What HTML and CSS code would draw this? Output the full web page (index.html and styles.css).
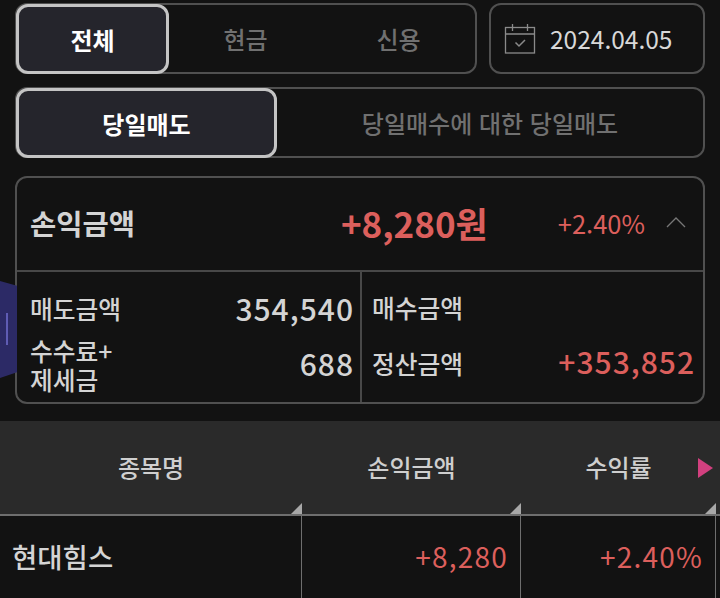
FILE: index.html
```html
<!DOCTYPE html>
<html lang="ko">
<head>
  <meta charset="UTF-8" />
  <meta name="viewport" content="width=device-width, initial-scale=1.0">
  <title>당일매도</title>
  <link rel="stylesheet" href="styles.css">
</head>
<body>
  <div class="side-tab"><span></span></div>

  <div class="filters">
    <div class="top-row">
      <div class="segment type-segment">
        <div class="seg-item active">전체</div>
        <div class="seg-item">현금</div>
        <div class="seg-item">신용</div>
      </div>
      <div class="date-box">
        <svg class="cal-icon" width="32" height="32" viewBox="0 0 32 32" fill="none" stroke="#8a8a8a" stroke-width="1.3">
          <rect x="1.5" y="4.5" width="29" height="25.5"/>
          <path d="M1.5 11h29M8.5 1v7M23.5 1v7"/>
          <path d="M11.5 19.5l3.5 3.5 6-6" stroke-width="1.5"/>
        </svg>
        <span>2024.04.05</span>
      </div>
    </div>
    <div class="segment sell-segment">
      <div class="seg-item active">당일매도</div>
      <div class="seg-item">당일매수에 대한 당일매도</div>
    </div>
  </div>

  <div class="summary">
    <div class="summary-head">
      <div class="summary-title">손익금액</div>
      <div class="summary-amount">+8,280원</div>
      <div class="summary-rate">+2.40%</div>
      <svg class="chevron" width="20" height="12" viewBox="0 0 20 12" fill="none" stroke="#777" stroke-width="1.3">
        <path d="M1 11l9-9 9 9"/>
      </svg>
    </div>
    <div class="summary-body">
      <div class="summary-col left-col">
        <div class="line first-line">
          <span class="label">매도금액</span>
          <span class="value">354,540</span>
        </div>
        <div class="line">
          <span class="label">수수료+<br>제세금</span>
          <span class="value">688</span>
        </div>
      </div>
      <div class="summary-col right-col">
        <div class="line first-line">
          <span class="label">매수금액</span>
        </div>
        <div class="line">
          <span class="label">정산금액</span>
          <span class="value red">+353,852</span>
        </div>
      </div>
    </div>
  </div>

  <div class="table">
    <div class="th">종목명</div>
    <div class="th">손익금액</div>
    <div class="th rate-th">수익률<i class="more-arrow"></i></div>
    <div class="th last-cell"></div>
    <div class="td name-cell">현대힘스</div>
    <div class="td red">+8,280</div>
    <div class="td red">+2.40%</div>
    <div class="td last-cell"></div>
  </div>
</body>
</html>
```

FILE: styles.css
```css
* {
  box-sizing: border-box;
}
body {
  background: #121212;
  font-family: "Noto Sans CJK KR", "Noto Sans", sans-serif;
  color: #d4d4d4;
  width: 720px;
  height: 598px;
  margin: 0;
  padding-top: 3px;
  overflow: hidden;
  position: relative;
}
.red {
  color: #dc5f5c;
}
.side-tab {
  position: absolute;
  left: 0;
  top: 281px;
  width: 17px;
  height: 97px;
  background: #2c2a66;
  clip-path: polygon(0 0, 100% 5%, 100% 94%, 0 100%);
}
.side-tab span {
  position: absolute;
  left: 6px;
  top: 32px;
  width: 2px;
  height: 32px;
  background: #5f5cb4;
}
.filters {
  padding: 0 15px;
  display: flex;
  flex-direction: column;
  gap: 13px;
}
.top-row {
  display: flex;
  gap: 12px;
}
.segment {
  display: flex;
  height: 71px;
  border: 2px solid #505050;
  border-radius: 12px;
}
.type-segment {
  width: 462px;
}
.sell-segment {
  width: 690px;
}
.seg-item {
  flex: 1;
  display: flex;
  align-items: center;
  justify-content: center;
  font-size: 24px;
  font-weight: 500;
  color: #707070;
}
.seg-item.active {
  background: #25252c;
  color: #fff;
  font-weight: 700;
  border: 3px solid #c4c4c4;
  border-radius: 12px;
  margin: -1px 0 -2px -1px;
}
.type-segment .seg-item.active {
  flex: 0 0 153px;
}
.sell-segment .seg-item.active {
  flex: 0 0 261px;
}
.date-box {
  width: 216px;
  height: 71px;
  border: 2px solid #505050;
  border-radius: 12px;
  display: flex;
  align-items: center;
  padding-left: 13px;
  gap: 14px;
  font-size: 24.5px;
  color: #d8d8d8;
}
.summary {
  margin: 18px 0 0 15px;
  width: 690px;
  height: 228px;
  border: 2px solid #505050;
  border-radius: 12px;
}
.summary-head {
  height: 94px;
  border-bottom: 2px solid #484848;
  display: flex;
  align-items: center;
  padding: 0 17px 4px 13px;
}
.summary-title {
  font-size: 28.5px;
  font-weight: 700;
  color: #d4d4d4;
}
.summary-amount {
  margin-left: auto;
  font-size: 35px;
  font-weight: 700;
  color: #dc5f5c;
}
.summary-rate {
  margin-left: 70px;
  font-size: 25.5px;
  color: #dc5f5c;
}
.chevron {
  margin-left: 21px;
}
.summary-body {
  display: flex;
}
.left-col {
  width: 345px;
  padding: 14px 6px 0 13px;
  border-right: 2px solid #484848;
  height: 130px;
}
.right-col {
  flex: 1;
  padding: 14px 8px 0 10px;
}
.line {
  display: flex;
  align-items: center;
  justify-content: space-between;
  font-size: 24.75px;
  min-height: 70px;
}
.first-line {
  min-height: 42px;
}
.label {
  font-weight: 500;
  line-height: 29px;
}
.value {
  font-size: 30px;
  font-weight: 500;
  letter-spacing: 1px;
  margin-bottom: 4px;
}
.first-line .value {
  margin-bottom: 0;
}
.table {
  margin-top: 17px;
  display: grid;
  grid-template-columns: 302px 219px 195px 4px;
  grid-template-rows: 95px 83px;
}
.th {
  background: #2a2a2a;
  border-bottom: 2px solid #6e6e6e;
  display: flex;
  align-items: center;
  justify-content: center;
  font-size: 24px;
  font-weight: 500;
  color: #cfcfcf;
  position: relative;
  padding-bottom: 2px;
}
.th::after {
  content: "";
  position: absolute;
  right: 0;
  bottom: 0;
  border-style: solid;
  border-width: 0 0 11px 11px;
  border-color: transparent transparent #a8a8a8 transparent;
}
.th.last-cell::after {
  display: none;
}
.more-arrow {
  position: absolute;
  right: 3px;
  top: 37px;
  border-style: solid;
  border-width: 10px 0 10px 15px;
  border-color: transparent transparent transparent #d2407f;
}
.td {
  border-right: 1px solid #6e6e6e;
  display: flex;
  align-items: flex-start;
  justify-content: flex-end;
  padding: 20px 12px 0 0;
  font-size: 28px;
  letter-spacing: 1.2px;
}
.name-cell {
  justify-content: flex-start;
  padding-left: 12px;
  font-size: 27.5px;
  font-weight: 500;
  letter-spacing: 0;
}
.td.last-cell {
  border-right: 0;
  padding: 0;
}
```
